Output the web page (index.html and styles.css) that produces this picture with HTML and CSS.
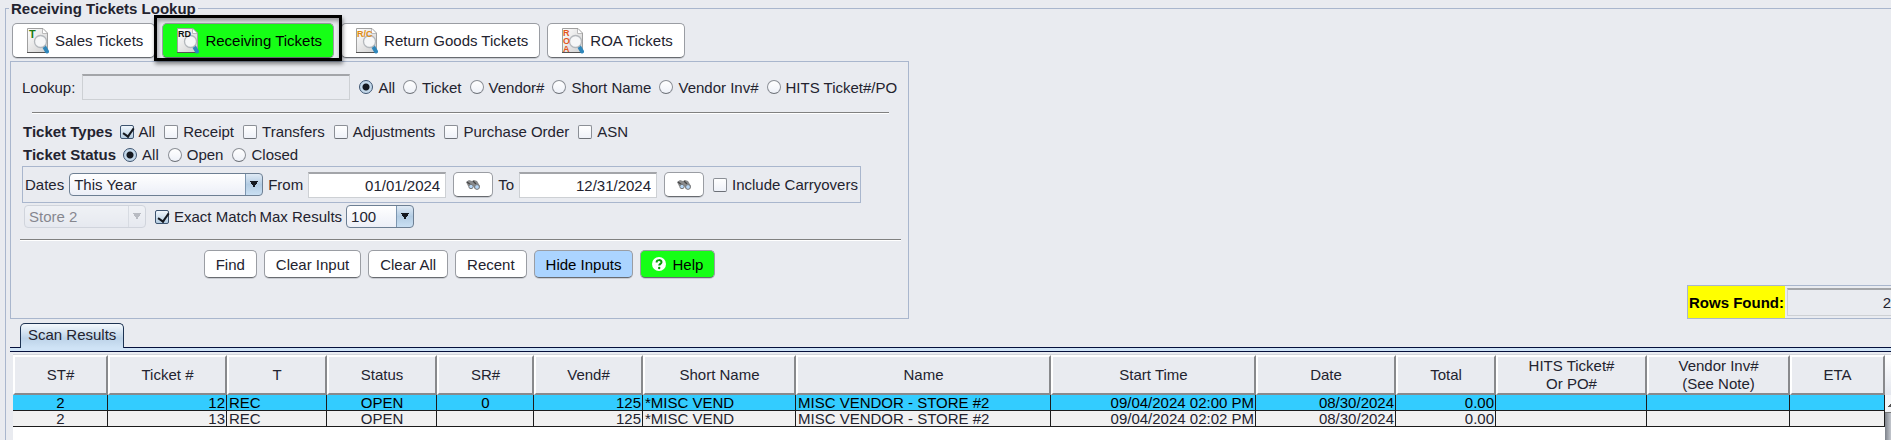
FILE: index.html
```
<!DOCTYPE html>
<html lang="en">
<head>
  <meta charset="UTF-8">
  <meta name="viewport" content="width=device-width, initial-scale=1.0">
  <title>Receiving Tickets Lookup</title>
  <link rel="stylesheet" href="styles.css">
</head>
<body>
  <!-- shared icon parts -->
  <svg class="defs" width="0" height="0" aria-hidden="true">
    <defs>
      <linearGradient id="paper" x1="0" y1="0" x2="1" y2="1">
        <stop offset="0" stop-color="#ffffff"/>
        <stop offset="1" stop-color="#cfcfcf"/>
      </linearGradient>
      <symbol id="page" viewBox="0 0 22 26">
        <path d="M.5 .5H16l4.500 4.500V24.500H.5z" fill="url(#paper)" stroke="#a0a0a0"/>
        <path d="M0 24.500H20" stroke="#555"/>
        <path d="M15.500 1v4.500H20" fill="#fff" stroke="#bbb"/>
        <path d="M16.500 17.500l3.500 6" stroke="#2f87bb" stroke-width="4" stroke-linecap="round"/>
        <circle cx="13.500" cy="13.500" r="6" fill="#f6f7f8" stroke="#b4b8bc" stroke-width="1.300"/>
      </symbol>
      <symbol id="binoculars" viewBox="0 0 16 12">
        <path d="M1 3l3-2 3 1 2-1 3 1 3 5-1 3-4 0-2-3-2 1-3-1z" fill="#8a8b8d"/>
        <path d="M2 3l4 3M8 2l3 3" stroke="#444" stroke-width="1.200"/>
        <circle cx="6" cy="7.500" r="2.200" fill="#b5d5f5" stroke="#777"/>
        <circle cx="12" cy="8" r="2.400" fill="#b5d5f5" stroke="#777"/>
      </symbol>
    </defs>
  </svg>

  <fieldset class="lookup">
    <legend>Receiving Tickets Lookup</legend>

    <div class="toolbar">
      <button class="btn big">
        <svg width="22" height="26"><use href="#page"/><text x="2" y="10" class="green">T</text></svg>
        Sales Tickets
      </button>
      <span class="current">
        <button class="btn big go">
          <svg width="22" height="26"><use href="#page"/><text x="1" y="9">RD</text></svg>
          Receiving Tickets
        </button>
      </span>
      <button class="btn big">
        <svg width="22" height="26"><use href="#page"/><text x="1" y="9" class="orange">R/C</text></svg>
        Return Goods Tickets
      </button>
      <button class="btn big">
        <svg width="22" height="26"><use href="#page"/><g class="red"><text x="1" y="8">R</text><text x="1" y="16">O</text><text x="1" y="24">A</text></g></svg>
        ROA Tickets
      </button>
    </div>

    <div class="inputs-row">
      <form class="panel" onsubmit="return false">
        <div class="row search">
          <label for="lookup">Lookup:</label>
          <input type="text" class="text" id="lookup">
          <label class="opt"><input type="radio" name="by" checked>All</label>
          <label class="opt"><input type="radio" name="by">Ticket</label>
          <label class="opt"><input type="radio" name="by">Vendor#</label>
          <label class="opt"><input type="radio" name="by">Short Name</label>
          <label class="opt"><input type="radio" name="by">Vendor Inv#</label>
          <label class="opt"><input type="radio" name="by">HITS Ticket#/PO</label>
        </div>
        <hr class="inset">
        <div class="row types">
          <b>Ticket Types</b>
          <label class="opt"><input type="checkbox" checked>All</label>
          <label class="opt"><input type="checkbox">Receipt</label>
          <label class="opt"><input type="checkbox">Transfers</label>
          <label class="opt"><input type="checkbox">Adjustments</label>
          <label class="opt"><input type="checkbox">Purchase Order</label>
          <label class="opt"><input type="checkbox">ASN</label>
        </div>
        <div class="row types">
          <b>Ticket Status</b>
          <label class="opt"><input type="radio" name="status" checked>All</label>
          <label class="opt"><input type="radio" name="status">Open</label>
          <label class="opt"><input type="radio" name="status">Closed</label>
        </div>
        <div class="row dates">
          <label for="range">Dates</label>
          <select id="range" class="range"><option>This Year</option></select>
          <label for="from">From</label>
          <input type="text" class="text date" id="from" value="01/01/2024">
          <button class="btn pick" aria-label="Pick from date"><svg width="16" height="12"><use href="#binoculars"/></svg></button>
          <label for="to">To</label>
          <input type="text" class="text date" id="to" value="12/31/2024">
          <button class="btn pick" aria-label="Pick to date"><svg width="16" height="12"><use href="#binoculars"/></svg></button>
          <label class="opt"><input type="checkbox">Include Carryovers</label>
        </div>
        <div class="row limits">
          <select class="store" aria-label="Store" disabled><option>Store 2</option></select>
          <label class="opt"><input type="checkbox" checked>Exact Match</label>
          <label for="max">Max Results</label>
          <select id="max" class="max"><option>100</option></select>
        </div>
        <hr>
        <div class="actions">
          <button class="btn">Find</button>
          <button class="btn">Clear Input</button>
          <button class="btn">Clear All</button>
          <button class="btn">Recent</button>
          <button class="btn hide">Hide Inputs</button>
          <button class="btn go">
            <svg width="14" height="14" viewBox="0 0 14 14"><circle cx="7" cy="7" r="7" fill="#fff"/><path d="M4.600 5.400C4.600 2.400 9.600 2.400 9.500 5.200 9.400 6.900 7.200 6.900 7.200 8.600" fill="none" stroke="#0a9a0a" stroke-width="2"/><circle cx="7.200" cy="11" r="1.200" fill="#0a9a0a"/></svg>
            Help
          </button>
        </div>
      </form>

      <div class="rows-found">
        <label for="rows">Rows Found:</label>
        <input type="text" class="text" id="rows" value="2" readonly>
      </div>
    </div>

    <div class="tabs"><button class="tab">Scan Results</button></div>
    <div class="results">
      <table>
        <colgroup>
          <col class="c-st"><col class="c-ticket"><col class="c-t"><col class="c-status"><col class="c-sr">
          <col class="c-vend"><col class="c-short"><col class="c-name"><col class="c-start"><col class="c-date">
          <col class="c-total"><col class="c-hits"><col class="c-inv"><col class="c-eta">
        </colgroup>
        <thead>
          <tr>
            <th>ST#</th><th>Ticket #</th><th>T</th><th>Status</th><th>SR#</th><th>Vend#</th><th>Short Name</th>
            <th>Name</th><th>Start Time</th><th>Date</th><th>Total</th><th>HITS Ticket#<br>Or PO#</th>
            <th>Vendor Inv#<br>(See Note)</th><th>ETA</th>
          </tr>
        </thead>
        <tbody>
          <tr class="selected">
            <td class="mid">2</td><td class="num">12</td><td>REC</td><td class="mid">OPEN</td><td class="mid">0</td>
            <td class="num">125</td><td>*MISC VEND</td><td>MISC VENDOR - STORE #2</td>
            <td class="num">09/04/2024 02:00 PM</td><td class="num">08/30/2024</td><td class="num">0.00</td>
            <td></td><td></td><td></td>
          </tr>
          <tr>
            <td class="mid">2</td><td class="num">13</td><td>REC</td><td class="mid">OPEN</td><td class="mid"></td>
            <td class="num">125</td><td>*MISC VEND</td><td>MISC VENDOR - STORE #2</td>
            <td class="num">09/04/2024 02:02 PM</td><td class="num">08/30/2024</td><td class="num">0.00</td>
            <td></td><td></td><td></td>
          </tr>
        </tbody>
      </table>
      <div class="scrollbar"><span class="corner"></span><span class="up"></span></div>
    </div>
  </fieldset>
</body>
</html>
```
FILE: styles.css
```
* {
  box-sizing: border-box;
}
body {
  margin: 0;
  height: 100vh;
  overflow: hidden;
  background: #e9ebf0;
  color: #23232f;
}
body, button, input, select {
  font: 15px/17px "Liberation Sans", Arial, sans-serif;
}
.defs {
  position: absolute;
}
.lookup {
  display: flex;
  flex-direction: column;
  height: 100vh;
  min-width: 0;
  margin: 0 0 0 5px;
  padding: 0;
  border: 1px solid #a9b6cd;
  border-width: 1px 0 0 1px;
}
legend {
  margin-left: 3px;
  padding: 0 2px;
  font-weight: bold;
}

/* buttons */
.btn {
  display: flex;
  align-items: center;
  justify-content: center;
  gap: 6px;
  height: 28px;
  padding: 0 11px;
  border: 1px solid #9a9da3;
  border-bottom-color: #686b70;
  border-radius: 5px;
  background: #fff;
  color: #23232f;
  white-space: nowrap;
  box-shadow: 0 1px 0 #c9ccd2;
}
.big {
  height: 35px;
  padding: 0 11px 0 14px;
}
.big svg text {
  font: bold 9px "Liberation Sans", Arial, sans-serif;
  fill: #111;
}
.big svg .green {
  fill: #1c7a12;
  font-size: 11px;
}
.big svg .orange {
  fill: #e08a10;
}
.big svg .red text {
  fill: #e2571d;
}
.go {
  background: #16ff16;
  color: #000;
}
.hide {
  background: #abd4ff;
  color: #000;
}

.toolbar {
  display: flex;
  gap: 7px;
  padding: 6px 0 3px 6px;
}
.current {
  position: relative;
}
/* callout round the open lookup */
.current::after {
  content: "";
  position: absolute;
  inset: -8px -8px -3px -8px;
  border: 3px solid #000;
  box-shadow: 1px 3px 4px rgba(0, 0, 0, .45), inset 1px 3px 4px rgba(0, 0, 0, .35);
  pointer-events: none;
}

/* input panel */
.inputs-row {
  display: flex;
  justify-content: space-between;
  align-items: flex-end;
  padding-left: 4px;
}
.panel {
  width: 899px;
  height: 258px;
  border: 1px solid #a9b6cd;
}
.row {
  display: flex;
  align-items: center;
  white-space: nowrap;
}
.opt {
  display: flex;
  align-items: center;
  gap: 5px;
  margin-left: 9px;
}
.search {
  padding: 12px 0 0 11px;
}
.search .opt + .opt {
  margin-left: 8px;
}
.text {
  height: 26px;
  padding: 0 5px;
  border: 1px solid #cdd0d4;
  border-top: 2px solid #a3a5a9;
  background: #fff;
  color: #23232f;
  outline: none;
}
#lookup {
  width: 268px;
  margin-left: 7px;
  background: #e9ebf0;
}
hr {
  height: 2px;
  margin: 11px 7px 0 9px;
  border: 0;
  border-top: 1px solid #808080;
  background: #fff;
}
.inset {
  margin: 12px 19px 0 21px;
}
.types {
  height: 23px;
  padding-left: 12px;
}
.inset + .types {
  margin-top: 6px;
}
.types b + .opt {
  margin-left: 7px;
}
input[type=radio], input[type=checkbox] {
  appearance: none;
  width: 14px;
  height: 14px;
  margin: 0;
  border: 1px solid #8b8f96;
  border-bottom-color: #6c7077;
  background: linear-gradient(#fff, #eef1f8);
}
input[type=checkbox] {
  border-radius: 2px;
}
input[type=radio] {
  border-radius: 50%;
}
input[type=radio]:checked {
  border-color: #3d5470;
  background: radial-gradient(circle, #14181f 3px, #c3d8ea 4px);
}
input[type=checkbox]:checked {
  position: relative;
  border-color: #3d5470;
  background: linear-gradient(#f0f6fc, #b4cde2);
}
input[type=checkbox]:checked::after {
  content: "";
  position: absolute;
  left: 4px;
  top: 0;
  width: 5px;
  height: 9px;
  border: solid #14181f;
  border-width: 0 2px 2px 0;
  transform: rotate(35deg);
}
.dates {
  width: 839px;
  height: 37px;
  margin: 0 0 2px 11px;
  padding-left: 2px;
  border: 1px solid #a9b6cd;
}
select {
  appearance: none;
  height: 23px;
  padding: 0 20px 0 4px;
  border: 1px solid #6d7f93;
  border-radius: 4px;
  color: #23232f;
  background:
    linear-gradient(to bottom right, #14181f 50%, transparent 50%) right 4px center / 4px 7px no-repeat,
    linear-gradient(to bottom left, #14181f 50%, transparent 50%) right 8px center / 4px 7px no-repeat,
    linear-gradient(#7c96b0, #7c96b0) right 16px top / 1px 100% no-repeat,
    linear-gradient(#dfeaf5, #b3cce3 50%, #c9dff2) right / 16px 100% no-repeat,
    linear-gradient(#fff, #eceff7);
}
select:disabled {
  opacity: .5;
  border-color: #b9bfca;
  background:
    linear-gradient(to bottom right, #888d96 50%, transparent 50%) right 4px center / 4px 7px no-repeat,
    linear-gradient(to bottom left, #888d96 50%, transparent 50%) right 8px center / 4px 7px no-repeat,
    linear-gradient(#c6ccd6, #c6ccd6) right 16px top / 1px 100% no-repeat,
    linear-gradient(#f6f8fb, #e4e8f0);
}
.range {
  width: 194px;
  margin: 0 5px;
}
.date {
  width: 138px;
  margin: 0 7px 0 5px;
  text-align: right;
}
.pick {
  width: 40px;
  height: 25px;
  margin-right: 5px;
  padding: 0;
}
.pick + .opt {
  margin-left: 4px;
}
.limits {
  padding-left: 13px;
}
.store {
  width: 122px;
}
.limits label + label {
  margin-left: 3px;
}
.max {
  width: 68px;
  margin-left: 4px;
}
.actions {
  display: flex;
  justify-content: center;
  gap: 7px;
  margin-top: 9px;
}

.rows-found {
  display: flex;
  align-items: center;
  height: 34px;
  padding-left: 1px;
  border: 1px solid #a9b6cd;
  border-right: 0;
  background: #ff0;
  color: #000;
  font-weight: bold;
}
#rows {
  width: 104px;
  height: 28px;
  margin-left: 3px;
  padding: 0;
  text-align: right;
  border-right: 0;
  background: #e9ebf0;
  box-shadow: 0 0 0 2px #e9ebf0;
}

/* results */
.tabs {
  display: flex;
  margin: 4px 0 0 4px;
  padding-left: 10px;
  height: 29px;
  border-bottom: 1px solid #05103c;
  background: linear-gradient(#05103c, #05103c) 0 24px / 100% 1px no-repeat, linear-gradient(#cfe3f6, #cfe3f6) 0 25px / 100% 3px no-repeat;
}
.tab {
  height: 25px;
  padding: 0 7px 3px;
  border: 1px solid #1d3352;
  border-bottom: 0;
  border-radius: 5px 5px 0 0;
  background: linear-gradient(#f4f9fd, #bdd3e8 60%, #cfe3f6);
  color: #23232f;
}
.results {
  display: flex;
  flex: 1;
  margin: 2px 0 0 7px;
  border-top: 1px solid #d3d5da;
  background: #fff;
}
table {
  flex: 1;
  align-self: flex-start;
  width: 0;
  table-layout: fixed;
  border-collapse: separate;
  border-spacing: 0;
}
th {
  height: 40px;
  padding: 0;
  border: 2px solid #fff;
  border-right-color: #88898c;
  border-bottom-color: #88898c;
  background: #e9ebf0;
  font-weight: normal;
  line-height: 18px;
}
td {
  height: 16px;
  padding: 0 1px 0 2px;
  border-right: 1px solid #1c1c1c;
  border-bottom: 1px solid #1c1c1c;
  background: #f1f1f1;
  line-height: 15px;
  white-space: nowrap;
}
.selected td {
  background: #3cf;
  color: #000;
}
.mid {
  text-align: center;
}
.num {
  text-align: right;
}
.c-st { width: 95px; }
.c-ticket { width: 119px; }
.c-t { width: 100px; }
.c-status { width: 110px; }
.c-sr { width: 97px; }
.c-vend { width: 109px; }
.c-short { width: 153px; }
.c-name { width: 255px; }
.c-start { width: 205px; }
.c-date { width: 140px; }
.c-total { width: 100px; }
.c-hits { width: 151px; }
.c-inv { width: 143px; }
.c-eta { width: 95px; }

.scrollbar {
  display: flex;
  flex-direction: column;
  width: 6px;
  background: linear-gradient(to right, #7d828a, #c3c7ce);
}
.corner {
  height: 40px;
  background: linear-gradient(#fff, #e3e6ee);
}
.up {
  height: 18px;
  border-bottom: 1px solid #777;
  background: linear-gradient(to bottom right, transparent 50%, #555 50%) 3px 8px / 4px 4px no-repeat, #f4f5f8;
}
```
